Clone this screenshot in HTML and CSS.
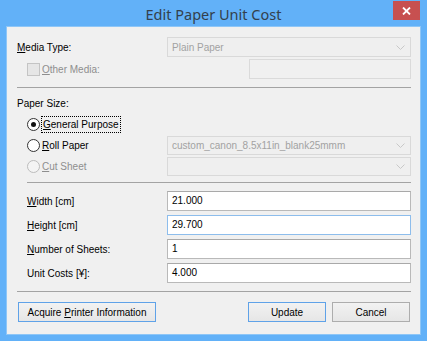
FILE: index.html
```html
<!DOCTYPE html>
<html lang="en">
<head>
  <meta charset="UTF-8">
  <title>Edit Paper Unit Cost</title>
  <link rel="stylesheet" href="styles.css">
</head>
<body>
  <div class="window">
    <!-- Title bar -->
    <div class="titlebar">
      <span></span>
      <div class="title">Edit Paper Unit Cost</div>
      <button class="close" type="button">
        <svg width="9" height="8" viewBox="0 0 9 8"><path d="M1 0.5 L8 7.5 M8 0.5 L1 7.5" stroke="#fff" stroke-width="1.8"/></svg>
      </button>
    </div>

    <div class="content">
      <!-- Media -->
      <div class="row">
        <label class="label"><u>M</u>edia Type:</label>
        <div class="select disabled">
          <span>Plain Paper</span>
          <svg class="chevron" width="9" height="5" viewBox="0 0 9 5"><polyline points="0.5,0.5 4.5,4.5 8.5,0.5" fill="none" stroke="#c8c8c8"/></svg>
        </div>
      </div>
      <div class="row other-row">
        <span class="check"></span>
        <label class="muted"><u>O</u>ther Media:</label>
        <div class="textbox disabled other-box"></div>
      </div>

      <div class="sep"></div>

      <!-- Paper size -->
      <div class="section-label">Paper Size:</div>
      <div class="radio-row">
        <div class="option">
          <span class="radio checked"></span>
          <span class="focus-text"><u>G</u>eneral Purpose</span>
        </div>
      </div>
      <div class="radio-row">
        <div class="option">
          <span class="radio"></span>
          <span><u>R</u>oll Paper</span>
        </div>
        <div class="select disabled small">
          <span>custom_canon_8.5x11in_blank25mmm</span>
          <svg class="chevron" width="9" height="5" viewBox="0 0 9 5"><polyline points="0.5,0.5 4.5,4.5 8.5,0.5" fill="none" stroke="#c8c8c8"/></svg>
        </div>
      </div>
      <div class="radio-row">
        <div class="option muted">
          <span class="radio off"></span>
          <span><u>C</u>ut Sheet</span>
        </div>
        <div class="select disabled small">
          <span></span>
          <svg class="chevron" width="9" height="5" viewBox="0 0 9 5"><polyline points="0.5,0.5 4.5,4.5 8.5,0.5" fill="none" stroke="#c8c8c8"/></svg>
        </div>
      </div>

      <div class="sep indent"></div>

      <!-- Values -->
      <div class="fields">
        <div class="row">
          <label class="label indent"><u>W</u>idth [cm]</label>
          <div class="textbox">21.000</div>
        </div>
        <div class="row">
          <label class="label indent"><u>H</u>eight [cm]</label>
          <div class="textbox focused">29.700</div>
        </div>
        <div class="row">
          <label class="label indent"><u>N</u>umber of Sheets:</label>
          <div class="textbox">1</div>
        </div>
        <div class="row">
          <label class="label indent">Unit Costs [¥]:</label>
          <div class="textbox">4.000</div>
        </div>
      </div>

      <div class="sep"></div>

      <!-- Buttons -->
      <div class="buttons">
        <button type="button" class="btn default acquire">Acquire <u>P</u>rinter Information</button>
        <div class="spacer"></div>
        <button type="button" class="btn default">Update</button>
        <button type="button" class="btn">Cancel</button>
      </div>
    </div>
  </div>
</body>
</html>
```

FILE: styles.css
```css
/* Global Styles */
* {
  margin: 0;
  padding: 0;
  box-sizing: border-box;
}
body {
  font-family: 'Liberation Sans', Arial, sans-serif;
  font-size: 10px;
  color: #000;
  background: #62b1f8;
}
u {
  text-decoration: underline;
  text-underline-offset: 1px;
}

/* Window frame */
.window {
  width: 427px;
  height: 341px;
  padding: 0 7px 7px;
  background: #62b1f8;
}
.titlebar {
  height: 27px;
  display: grid;
  grid-template-columns: 1fr auto 1fr;
  align-items: start;
}
.title {
  font-family: 'Noto Sans', sans-serif;
  font-size: 14.5px;
  color: #33404c;
  line-height: 27px;
  margin-top: 1px;
}
.close {
  justify-self: end;
  width: 27px;
  height: 19px;
  margin-top: 1px;
  border: none;
  background: #c75050;
  display: flex;
  align-items: center;
  justify-content: center;
}

/* Dialog body */
.content {
  height: 307px;
  background: #f0f0f0;
  padding: 10px 9px 0 10px;
  box-shadow: 0 0 0 1px #8ec6f7;
}
.row {
  display: flex;
  align-items: center;
  height: 20px;
}
.label {
  width: 150px;
  flex-shrink: 0;
}
.label.indent {
  padding-left: 10px;
}
.muted {
  color: #8e8e8e;
}
.other-row {
  margin-top: 2px;
  padding-left: 10px;
}
.other-box {
  margin-left: auto;
  width: 162px;
  flex: none !important;
}

/* Controls */
.select {
  flex: 1;
  height: 20px;
  display: flex;
  align-items: center;
  justify-content: space-between;
  padding: 0 5px 0 4px;
  border: 1px solid #d9d9d9;
  background: #efefef;
  color: #a2a2a2;
}
.select.small {
  height: 19px;
}
.textbox {
  flex: 1;
  height: 20px;
  line-height: 18px;
  padding: 0 4px;
  border: 1px solid #b9b9b9;
  border-top-color: #a9a9a9;
  background: #fff;
}
.textbox.disabled {
  border-color: #dadada;
  background: #f0f0f0;
}
.textbox.focused {
  border-color: #8dbdec;
}
.check {
  width: 13px;
  height: 13px;
  border: 1px solid #c4c4c4;
  background: #e6e6e6;
  margin-right: 2px;
}
.sep {
  height: 1px;
  background: #a3a3a3;
  margin-top: 8px;
}
.sep.indent {
  margin-left: 10px;
  margin-top: 5px;
}

/* Paper size */
.section-label {
  height: 21px;
  line-height: 21px;
  margin-top: 5px;
}
.radio-row {
  display: flex;
  align-items: center;
  height: 21px;
  padding-left: 10px;
}
.option {
  width: 140px;
  flex-shrink: 0;
  display: flex;
  align-items: center;
}
.radio {
  width: 13px;
  height: 13px;
  border-radius: 50%;
  border: 1px solid #333;
  background: #fff;
  margin-right: 2px;
  display: flex;
  align-items: center;
  justify-content: center;
}
.radio.checked::after {
  content: "";
  width: 5px;
  height: 5px;
  border-radius: 50%;
  background: #111;
}
.radio.off {
  border-color: #bcbcbc;
  background: #f4f4f4;
}
.focus-text {
  outline: 1px dotted #000;
  padding: 2px 1px;
}

/* Values */
.fields {
  margin-top: 8px;
  display: flex;
  flex-direction: column;
  gap: 4px;
}

/* Buttons */
.buttons {
  display: flex;
  margin-top: 10px;
  padding: 0 1px;
  gap: 6px;
}
.spacer {
  flex: 1;
}
.btn {
  font-family: inherit;
  font-size: inherit;
  color: #000;
  width: 78px;
  height: 20px;
  border: 1px solid #adadad;
  background: linear-gradient(#f2f2f2, #e6e6e6);
}
.btn.default {
  border-color: #5fa2e8;
}
.btn.acquire {
  width: 138px;
}
```
